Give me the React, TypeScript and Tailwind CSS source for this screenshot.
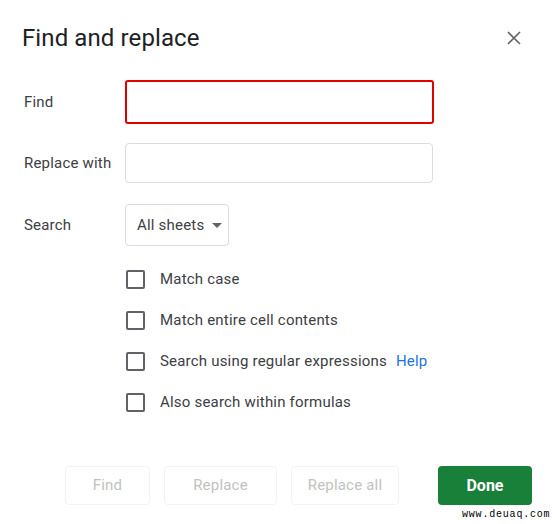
import React from "react";

const options = [
  "Match case",
  "Match entire cell contents",
  "Search using regular expressions",
  "Also search within formulas",
];

const App: React.FC = () => {
  return (
    <div className="relative w-[555px] h-[524px] bg-white font-['Roboto',sans-serif] text-[#3c4043]">
      {/* header */}
      <div className="flex items-center justify-between pl-[22px] pr-[34px] pt-[22px]">
        <h1 className="text-[24px] leading-[32px] tracking-[0.1px] text-[#202124] font-['Roboto',sans-serif]">
          Find and replace
        </h1>
        <svg width="14" height="14" viewBox="0 0 14 14">
          <path d="M1 1 L13 13 M13 1 L1 13" stroke="#5f6368" strokeWidth="1.6" />
        </svg>
      </div>

      {/* fields */}
      <div className="mt-[26px] flex items-center">
        <span className="w-[125px] pl-[24px] text-[15px] tracking-[0.2px]">Find</span>
        <div className="w-[309px] h-[44px] border-2 border-[#e10000] rounded-[3px]" />
      </div>
      <div className="mt-[19px] flex items-center">
        <span className="w-[125px] pl-[24px] text-[15px] tracking-[0.2px]">Replace with</span>
        <div className="w-[308px] h-[40px] border border-[#dadce0] rounded-[4px]" />
      </div>
      <div className="mt-[21px] flex items-center">
        <span className="w-[125px] pl-[24px] text-[15px] tracking-[0.2px]">Search</span>
        <div className="w-[104px] h-[42px] border border-[#dadce0] rounded-[4px] flex items-center pl-[11px] gap-[8px]">
          <span className="text-[15px] tracking-[0.2px] text-[#3c4043]">All sheets</span>
          <svg width="10" height="5" viewBox="0 0 10 5">
            <path d="M0 0 L10 0 L5 5 Z" fill="#5f6368" />
          </svg>
        </div>
      </div>

      {/* checkboxes */}
      <div className="mt-[13px] flex flex-col pl-[126px]">
        {options.map((o, i) => (
          <div key={o} className="h-[41px] flex items-center">
            <div className="w-[19px] h-[19px] border-2 border-[#5f6368] rounded-[2px]" />
            <span className="ml-[15px] text-[15px] tracking-[0.2px]">{o}</span>
            {i === 2 && (
              <span className="ml-[9px] text-[15px] tracking-[0.2px] text-[#1a73e8]">Help</span>
            )}
          </div>
        ))}
      </div>

      {/* buttons */}
      <div className="mt-[43px] flex items-center pl-[65px]">
        <div className="w-[85px] h-[39px] border border-[#f3f3f3] rounded-[4px] flex items-center justify-center text-[15px] tracking-[0.2px] text-[#c2c2c2]">
          Find
        </div>
        <div className="ml-[14px] w-[113px] h-[39px] border border-[#f3f3f3] rounded-[4px] flex items-center justify-center text-[15px] tracking-[0.2px] text-[#c2c2c2]">
          Replace
        </div>
        <div className="ml-[14px] w-[108px] h-[39px] border border-[#f3f3f3] rounded-[4px] flex items-center justify-center text-[15px] tracking-[0.2px] text-[#c2c2c2]">
          Replace all
        </div>
        <div className="ml-[39px] w-[94px] h-[39px] bg-[#188038] rounded-[4px] flex items-center justify-center text-[16px] font-bold text-white">
          Done
        </div>
      </div>

      <span className="absolute left-[462px] top-[508px] text-[10px] leading-[14px] tracking-[0.8px] font-['Liberation_Mono',monospace] text-black">
        www.deuaq.com
      </span>
    </div>
  );
};

export default App;
